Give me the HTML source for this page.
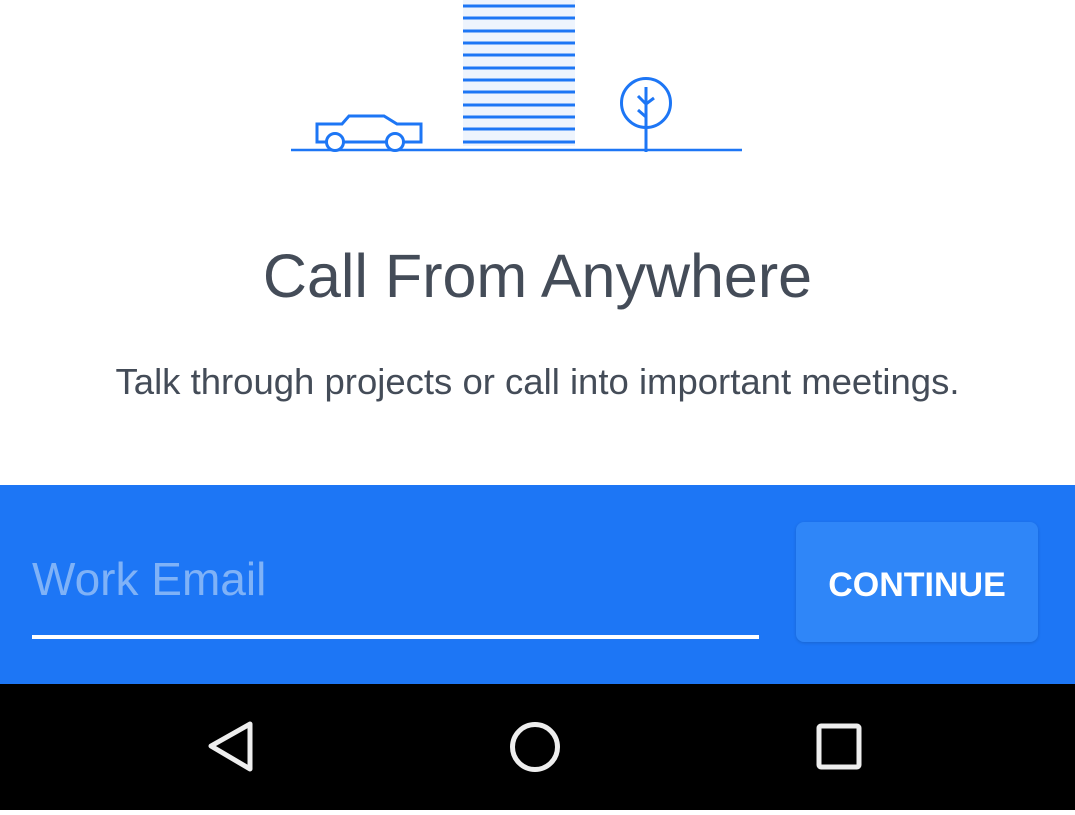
<!DOCTYPE html>
<html><head><meta charset="utf-8"><style>
html,body{margin:0;padding:0}
body{width:1075px;height:810px;position:relative;overflow:hidden;background:#fff;font-family:"Liberation Sans",sans-serif}
.t{position:absolute;left:0;width:1075px;text-align:center;color:#444c58}
#band{position:absolute;left:0;top:485px;width:1075px;height:199px;background:#1d76f5}
#nav{position:absolute;left:0;top:684px;width:1075px;height:126px;background:#000}
</style></head><body>
<svg style="position:absolute;left:0;top:0" width="1075" height="160" fill="none" stroke="#1d76f5" stroke-width="2.5">
<rect x="463" y="0" width="112" height="146" fill="#eef4fd" stroke="none"/>
<g stroke-width="3">
<line x1="463" y1="6" x2="575" y2="6"/><line x1="463" y1="18" x2="575" y2="18"/><line x1="463" y1="31" x2="575" y2="31"/><line x1="463" y1="43" x2="575" y2="43"/><line x1="463" y1="55" x2="575" y2="55"/><line x1="463" y1="68" x2="575" y2="68"/><line x1="463" y1="80" x2="575" y2="80"/><line x1="463" y1="92" x2="575" y2="92"/><line x1="463" y1="105" x2="575" y2="105"/><line x1="463" y1="117" x2="575" y2="117"/><line x1="463" y1="129" x2="575" y2="129"/><line x1="463" y1="142" x2="575" y2="142"/>
</g>
<line x1="291" y1="150" x2="742" y2="150"/>
<g stroke-width="3">
<path d="M326 142 H317 V124 H342 L349 116 H384 L397 124 H421 V142 H404 M344 142 H386"/>
<circle cx="335" cy="142" r="8.5" fill="#fff"/><circle cx="395" cy="142" r="8.5" fill="#fff"/>
<circle cx="646" cy="103" r="24.5"/>
<path d="M646 87 V152 M638 96 L646 104 L654 98 M638 110 L646 117"/>
</g>
</svg>
<div class="t" style="top:241px;font-size:61px;">Call From Anywhere</div>
<div class="t" style="top:361px;font-size:36.5px;">Talk through projects or call into important meetings.</div>
<div id="band">
<div style="position:absolute;left:32px;top:67px;font-size:46px;color:#7fb2f7">Work Email</div>
<div style="position:absolute;left:32px;top:150px;width:727px;height:4px;background:#fff"></div>
<div style="position:absolute;left:796px;top:37px;width:242px;height:120px;background:#2f86f8;border-radius:8px;box-shadow:0 1px 3px rgba(0,0,0,0.15);color:#fff;font-weight:bold;font-size:34px;text-align:center;line-height:126px">CONTINUE</div>
</div>
<div id="nav">
<svg width="1075" height="126" fill="none" stroke="#eee" stroke-width="5" stroke-linejoin="round">
<path d="M250 40 V85 L211 62 Z"/>
<circle cx="535" cy="63" r="22.5"/>
<rect x="819" y="42" width="40" height="41" rx="2"/>
</svg>
</div>
</body></html>
